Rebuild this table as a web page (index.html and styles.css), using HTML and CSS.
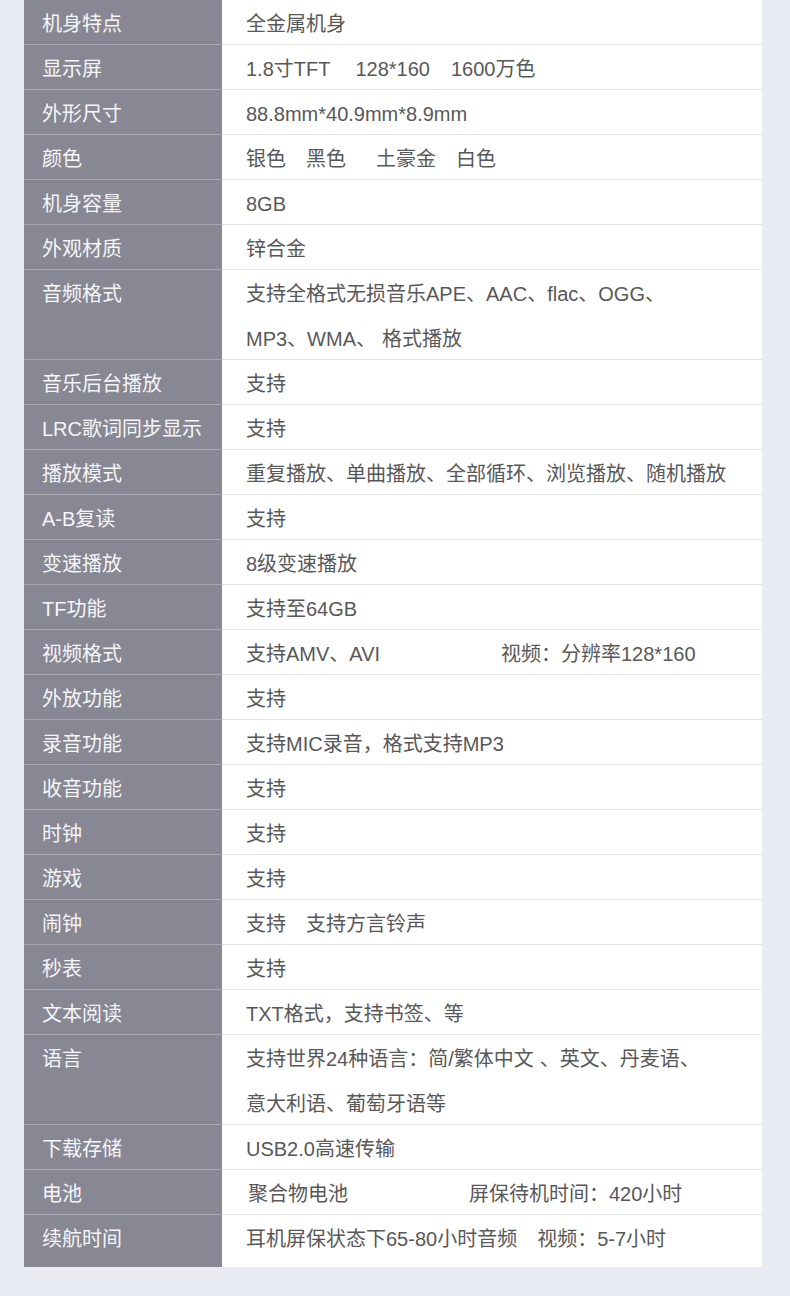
FILE: index.html
```html
<!DOCTYPE html>
<html lang="zh-CN">
<head>
<meta charset="utf-8">
<title>参数</title>
<link rel="stylesheet" href="styles.css">
</head>
<body>
<div class="spec">
  <div class="row"><div class="k">机身特点</div><div class="v">全金属机身</div></div>
  <div class="row"><div class="k">显示屏</div><div class="v">1.8寸TFT<span class="g1"></span>128*160<span class="g2"></span>1600万色</div></div>
  <div class="row"><div class="k">外形尺寸</div><div class="v">88.8mm*40.9mm*8.9mm</div></div>
  <div class="row"><div class="k">颜色</div><div class="v">银色<span class="g3"></span>黑色<span class="g4"></span>土豪金<span class="g3"></span>白色</div></div>
  <div class="row"><div class="k">机身容量</div><div class="v">8GB</div></div>
  <div class="row"><div class="k">外观材质</div><div class="v">锌合金</div></div>
  <div class="row tall"><div class="k">音频格式</div><div class="v">支持全格式无损音乐APE、AAC、flac、OGG、<br>MP3、WMA、<span class="g5"></span>格式播放</div></div>
  <div class="row"><div class="k">音乐后台播放</div><div class="v">支持</div></div>
  <div class="row"><div class="k">LRC歌词同步显示</div><div class="v">支持</div></div>
  <div class="row"><div class="k">播放模式</div><div class="v">重复播放、单曲播放、全部循环、浏览播放、随机播放</div></div>
  <div class="row"><div class="k">A-B复读</div><div class="v">支持</div></div>
  <div class="row"><div class="k">变速播放</div><div class="v">8级变速播放</div></div>
  <div class="row"><div class="k">TF功能</div><div class="v">支持至64GB</div></div>
  <div class="row"><div class="k">视频格式</div><div class="v"><span class="col-video">支持AMV、AVI</span>视频：分辨率128*160</div></div>
  <div class="row"><div class="k">外放功能</div><div class="v">支持</div></div>
  <div class="row"><div class="k">录音功能</div><div class="v">支持MIC录音，格式支持MP3</div></div>
  <div class="row"><div class="k">收音功能</div><div class="v">支持</div></div>
  <div class="row"><div class="k">时钟</div><div class="v">支持</div></div>
  <div class="row"><div class="k">游戏</div><div class="v">支持</div></div>
  <div class="row"><div class="k">闹钟</div><div class="v">支持<span class="g3"></span>支持方言铃声</div></div>
  <div class="row"><div class="k">秒表</div><div class="v">支持</div></div>
  <div class="row"><div class="k">文本阅读</div><div class="v">TXT格式，支持书签、等</div></div>
  <div class="row tall"><div class="k">语言</div><div class="v">支持世界24种语言：简/繁体中文<span class="g6"></span>、英文、丹麦语、<br>意大利语、葡萄牙语等</div></div>
  <div class="row"><div class="k">下载存储</div><div class="v">USB2.0高速传输</div></div>
  <div class="row"><div class="k">电池</div><div class="v"><span class="col-bat">聚合物电池</span>屏保待机时间：420小时</div></div>
  <div class="row last"><div class="k">续航时间</div><div class="v">耳机屏保状态下65-80小时音频<span class="g3"></span>视频：5-7小时</div></div>
</div>
</body>
</html>
```

FILE: styles.css
```css
html, body {
  margin: 0;
  padding: 0;
  background: #e9ebf3;
}
body {
  width: 790px;
  height: 1296px;
  overflow: hidden;
  font-family: "Liberation Sans", "Noto Sans CJK SC", sans-serif;
  font-size: 20px;
}
.spec {
  margin-left: 24px;
  width: 738px;
  display: flex;
  flex-direction: column;
}
.row {
  display: flex;
  height: 45px;
  line-height: 45px;
}
.row.tall { height: 90px; }
.row.last { height: 52px; }
.k {
  width: 198px;
  flex: none;
  box-sizing: border-box;
  padding-left: 18px;
  padding-top: 2px;
  background: #878893;
  color: #f5f5f8;
  border-bottom: 1px solid #a6a7b1;
  white-space: nowrap;
}
.v {
  flex: 1;
  box-sizing: border-box;
  padding-left: 24px;
  padding-top: 2px;
  background: #ffffff;
  color: #585858;
  border-bottom: 1px solid #e2e2e4;
  white-space: nowrap;
  line-height: 45px;
}
.row .k, .row .v { height: 100%; }
.row.last .k, .row.last .v { border-bottom: none; }
.g1 { display: inline-block; width: 25px; }
.g2 { display: inline-block; width: 21px; }
.g3 { display: inline-block; width: 20px; }
.g4 { display: inline-block; width: 30px; }
.g5 { display: inline-block; width: 6px; }
.g6 { display: inline-block; width: 6px; }
.col-video { display: inline-block; width: 255px; }
.col-bat { display: inline-block; width: 221px; padding-left: 2px; }
```
